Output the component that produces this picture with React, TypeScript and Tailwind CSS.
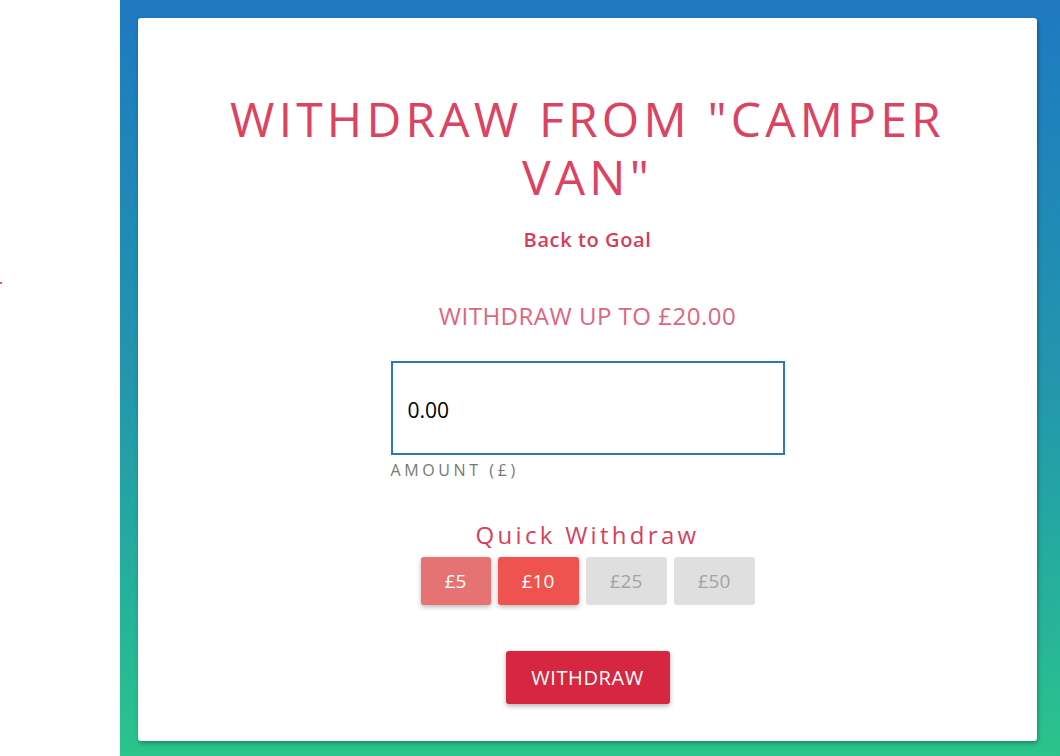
import React, { useState } from "react";

const QUICK_AMOUNTS = [
  { label: "£5", value: 5, width: "w-[70px]" },
  { label: "£10", value: 10, width: "w-[81px]" },
  { label: "£25", value: 25, width: "w-[81px]" },
  { label: "£50", value: 50, width: "w-[81px]" },
];

const MAX_WITHDRAW = 20;

const QuickButton = ({ label, width, enabled, active, onClick }: { label: string; width: string; enabled: boolean; active: boolean; onClick: () => void }) => {
  if (!enabled) {
    return (
      <button disabled className={`${width} h-12 rounded-[3px] bg-[#dfdfdf] text-[19px] text-[#a3a3a3]`}>
        {label}
      </button>
    );
  }
  return (
    <button
      onClick={onClick}
      className={`${width} h-12 rounded-[3px] text-[19px] text-white shadow-[0_2px_5px_rgba(0,0,0,0.28)] ${active ? "bg-[#ef5350]" : "bg-[#e57373]"}`}
    >
      {label}
    </button>
  );
};

const App = () => {
  const [amount, setAmount] = useState("0.00");
  const [picked, setPicked] = useState<number | null>(10);

  return (
    <div className="flex h-[756px] w-[1060px] overflow-hidden bg-white font-['Open_Sans','Noto_Sans',sans-serif]">
      <div className="relative w-[120px] shrink-0 bg-white">
        <span className="absolute left-0 top-[282px] h-[2px] w-[2px] rounded-full bg-[#e0203a]" />
      </div>

      <div className="flex flex-1 bg-gradient-to-b from-[#1f79c1] via-[#2396ad] to-[#2bc48a] pb-[15px] pl-[18px] pr-[23px] pt-[18px]">
        <div className="flex flex-1 flex-col items-center rounded-[3px] bg-white pt-[72px] shadow-[1px_2px_4px_rgba(0,0,0,0.3)]">
          <h1 className="w-[780px] text-center text-[48px] font-normal leading-[57.6px] tracking-[4.2px] text-[#dc4262]">
            WITHDRAW FROM "CAMPER VAN"
          </h1>

          <a href="#" className="mt-[21px] text-[20px] font-semibold leading-7 tracking-[0.6px] text-[#d63c5c]">
            Back to Goal
          </a>

          <h2 className="mt-[46px] text-[24px] font-normal leading-8 tracking-[0.5px] text-[#e06482]">
            WITHDRAW UP TO £{MAX_WITHDRAW.toFixed(2)}
          </h2>

          <div className="mt-[29px] flex w-[394px] flex-col">
            <input
              value={amount}
              onChange={(e) => setAmount(e.target.value)}
              className="h-[94px] w-full border-2 border-[#2a78b8] px-[15px] pt-[3px] text-[21px] text-black outline-none"
            />
            <label className="mt-[5px] text-[16px] leading-5 tracking-[3.6px] text-[#777]">AMOUNT (£)</label>
          </div>

          <div className="mt-[39px] text-[24px] leading-8 tracking-[3.3px] text-[#d6405e]">Quick Withdraw</div>

          <div className="mt-[6px] flex gap-[7px]">
            {QUICK_AMOUNTS.map((q) => (
              <QuickButton
                key={q.value}
                label={q.label}
                width={q.width}
                enabled={q.value <= MAX_WITHDRAW}
                active={picked === q.value}
                onClick={() => {
                  setPicked(q.value);
                  setAmount(q.value.toFixed(2));
                }}
              />
            ))}
          </div>

          <button className="mt-[46px] h-[53px] w-[164px] rounded-[3px] bg-[#d7263f] text-[20px] tracking-[0.6px] text-white shadow-[0_2px_5px_rgba(0,0,0,0.3)]">
            WITHDRAW
          </button>
        </div>
      </div>
    </div>
  );
};

export default App;
